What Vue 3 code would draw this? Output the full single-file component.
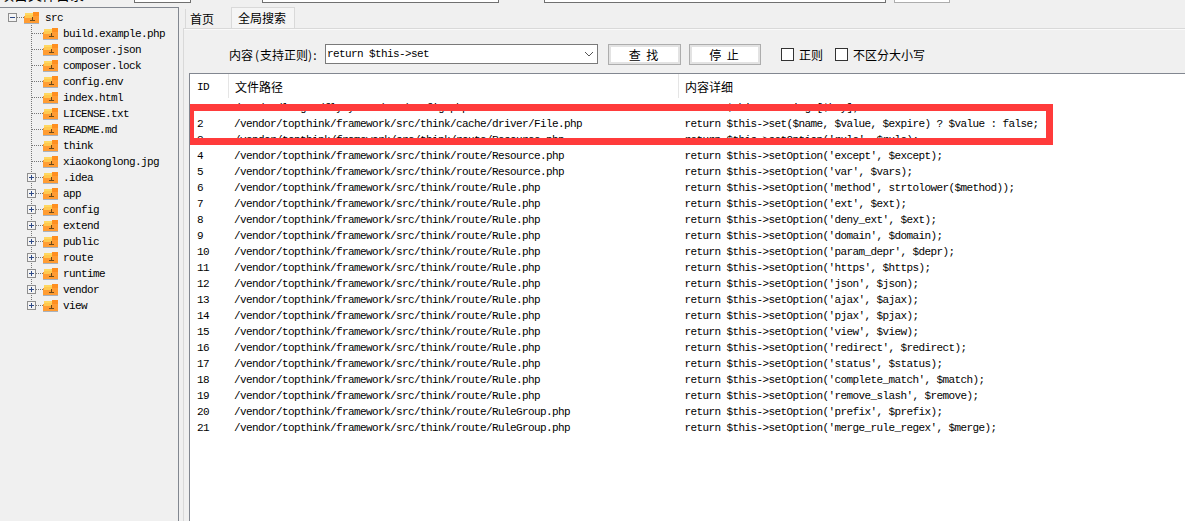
<script setup>
const files = ['build.example.php','composer.json','composer.lock','config.env','index.html','LICENSE.txt','README.md','think','xiaokonglong.jpg']
const dirs = ['.idea','app','config','extend','public','route','runtime','vendor','view']
const R = '/vendor/topthink/framework/src/think/route/'
const rows = [
  ['/vendor/league/flysystem/src/Config.php', "return $this->settings[$key];"],
  ['/vendor/topthink/framework/src/think/cache/driver/File.php', "return $this->set($name, $value, $expire) ? $value : false;"],
  [R+'Resource.php', "return $this->setOption('rule', $rule);"],
  [R+'Resource.php', "return $this->setOption('except', $except);"],
  [R+'Resource.php', "return $this->setOption('var', $vars);"],
  [R+'Rule.php', "return $this->setOption('method', strtolower($method));"],
  [R+'Rule.php', "return $this->setOption('ext', $ext);"],
  [R+'Rule.php', "return $this->setOption('deny_ext', $ext);"],
  [R+'Rule.php', "return $this->setOption('domain', $domain);"],
  [R+'Rule.php', "return $this->setOption('param_depr', $depr);"],
  [R+'Rule.php', "return $this->setOption('https', $https);"],
  [R+'Rule.php', "return $this->setOption('json', $json);"],
  [R+'Rule.php', "return $this->setOption('ajax', $ajax);"],
  [R+'Rule.php', "return $this->setOption('pjax', $pjax);"],
  [R+'Rule.php', "return $this->setOption('view', $view);"],
  [R+'Rule.php', "return $this->setOption('redirect', $redirect);"],
  [R+'Rule.php', "return $this->setOption('status', $status);"],
  [R+'Rule.php', "return $this->setOption('complete_match', $match);"],
  [R+'Rule.php', "return $this->setOption('remove_slash', $remove);"],
  [R+'RuleGroup.php', "return $this->setOption('prefix', $prefix);"],
  [R+'RuleGroup.php', "return $this->setOption('merge_rule_regex', $merge);"],
]
</script>

<template>
  <div class="app">
    <div class="top">
      <div class="top-row">
        <span class="top-title">项目文件目录</span>
        <span class="top-box b1"></span>
        <span class="top-box b2"></span>
        <span class="top-box b3"></span>
        <span class="top-btn"></span>
      </div>
    </div>
    <div class="main">
      <aside class="side">
        <div class="tree-row root">
          <svg class="root-gutter" width="16" height="16" shape-rendering="crispEdges">
            <line x1="9" y1="8.5" x2="16" y2="8.5" stroke="#777" stroke-dasharray="1 1" />
            <rect x="0.5" y="4.5" width="8" height="8" fill="#f4f4f4" stroke="#8e8e8e" />
            <line x1="2" y1="8.5" x2="7" y2="8.5" stroke="#2f4a86" />
          </svg>
          <svg class="folder" width="16" height="13" viewBox="0 0 16 13" shape-rendering="crispEdges">
            <rect x="1" y="1" width="9" height="4" fill="#ffd760" />
            <rect x="9" y="0" width="6" height="4" fill="#ff8f1f" />
            <rect x="0" y="4" width="15" height="7" fill="#ff9c33" />
            <rect x="1" y="3" width="8" height="3" fill="#ffc94f" />
            <rect x="8" y="5" width="1" height="3" fill="#6b4a1a" />
            <rect x="6" y="8" width="5" height="1" fill="#6b4a1a" />
            <rect x="0" y="11" width="15" height="1" fill="#a9b2bd" />
          </svg>
          <span class="mono name">src</span>
        </div>
        <div v-for="f in files" :key="f" class="tree-row child">
          <svg class="gutter" width="16" height="16" shape-rendering="crispEdges">
            <line x1="4.5" y1="0" x2="4.5" y2="16" stroke="#777" stroke-dasharray="1 1" />
            <line x1="5" y1="8.5" x2="16" y2="8.5" stroke="#777" stroke-dasharray="1 1" />
          </svg>
          <svg class="folder" width="16" height="13" viewBox="0 0 16 13" shape-rendering="crispEdges">
            <rect x="1" y="1" width="9" height="4" fill="#ffd760" />
            <rect x="9" y="0" width="6" height="4" fill="#ff8f1f" />
            <rect x="0" y="4" width="15" height="7" fill="#ff9c33" />
            <rect x="1" y="3" width="8" height="3" fill="#ffc94f" />
            <rect x="8" y="5" width="1" height="3" fill="#6b4a1a" />
            <rect x="6" y="8" width="5" height="1" fill="#6b4a1a" />
            <rect x="0" y="11" width="15" height="1" fill="#a9b2bd" />
          </svg>
          <span class="mono name">{{ f }}</span>
        </div>
        <div v-for="(d, i) in dirs" :key="d" class="tree-row child">
          <svg class="gutter" width="16" height="16" shape-rendering="crispEdges">
            <line x1="4.5" y1="0" x2="4.5" :y2="i === dirs.length - 1 ? 4 : 16" stroke="#777" stroke-dasharray="1 1" />
            <line x1="9" y1="8.5" x2="16" y2="8.5" stroke="#777" stroke-dasharray="1 1" />
            <rect x="0.5" y="4.5" width="8" height="8" fill="#f4f4f4" stroke="#8e8e8e" />
            <line x1="2" y1="8.5" x2="7" y2="8.5" stroke="#2f4a86" />
            <line x1="4.5" y1="6" x2="4.5" y2="11" stroke="#2f4a86" />
          </svg>
          <svg class="folder" width="16" height="13" viewBox="0 0 16 13" shape-rendering="crispEdges">
            <rect x="1" y="1" width="9" height="4" fill="#ffd760" />
            <rect x="9" y="0" width="6" height="4" fill="#ff8f1f" />
            <rect x="0" y="4" width="15" height="7" fill="#ff9c33" />
            <rect x="1" y="3" width="8" height="3" fill="#ffc94f" />
            <rect x="8" y="5" width="1" height="3" fill="#6b4a1a" />
            <rect x="6" y="8" width="5" height="1" fill="#6b4a1a" />
            <rect x="0" y="11" width="15" height="1" fill="#a9b2bd" />
          </svg>
          <span class="mono name">{{ d }}</span>
        </div>
      </aside>
      <section class="pane">
        <div class="tabs">
          <div class="tab">首页</div>
          <div class="tab active">全局搜索</div>
        </div>
        <div class="panel">
          <div class="form">
            <label class="label">内容<span class="po">(</span>支持正则<span>)</span><span class="colon">:</span></label>
            <div class="select">
              <span class="mono">return $this-&gt;set</span>
              <svg width="10" height="6" viewBox="0 0 10 6"><path d="M1 1l4 4 4-4" fill="none" stroke="#555" /></svg>
            </div>
            <button class="btn first">查 找</button>
            <button class="btn second">停 止</button>
            <span class="check c1"></span><span class="check-label">正则</span>
            <span class="check c2"></span><span class="check-label">不区分大小写</span>
          </div>
          <div class="list">
            <div class="head">
              <div class="hcell id mono">ID</div>
              <div class="hcell path">文件路径</div>
              <div class="hcell detail">内容详细</div>
            </div>
            <div class="body">
              <div v-for="(r, i) in rows" :key="i" class="row mono">
                <span class="id">{{ i + 1 }}</span>
                <span class="path">{{ r[0] }}</span>
                <span class="detail">{{ r[1] }}</span>
              </div>
              <div class="mark"></div>
            </div>
          </div>
        </div>
      </section>
    </div>
  </div>
</template>

<style scoped>
.app {
  width: 1185px;
  height: 521px;
  overflow: hidden;
  display: flex;
  flex-direction: column;
  background: #f0f0f0;
  color: #000;
  font-family: "Noto Sans CJK SC", sans-serif;
  font-size: 12px;
}
.mono {
  font-family: "Liberation Mono", monospace;
  font-size: 11px;
  letter-spacing: -0.6px;
  white-space: pre;
}
.top { height: 7px; flex: none; }
.top-row {
  height: 3px;
  display: flex;
  align-items: flex-end;
  overflow: hidden;
}
.top-title { width: 134px; flex: none; font-size: 14px; line-height: 18px; white-space: nowrap; }
.top-box { height: 12px; flex: none; border: 1px solid #707070; background: #fff; box-sizing: border-box; }
.b1 { width: 57px; }
.b2 { width: 237px; margin-left: 71px; }
.b3 { width: 342px; margin-left: 45px; }
.top-btn { width: 56px; height: 12px; margin-left: 8px; flex: none; box-sizing: border-box; border: 1px solid #adadad; background: #fff; }
.main { flex: 1; display: flex; min-height: 0; }
.side {
  width: 179px;
  flex: none;
  box-sizing: border-box;
  border-top: 1px solid #828790;
  border-right: 1px solid #828790;
  padding-top: 1px;
}
.tree-row { height: 16px; display: flex; align-items: center; }
.root { padding-left: 8px; }
.child { padding-left: 27px; }
.root-gutter, .gutter { flex: none; }
.folder { flex: none; margin-top: 3px; }
.name { margin-left: 4px; line-height: 16px; margin-top: 2px; }
.root .name { margin-left: 5px; }
.pane { flex: 1; min-width: 0; padding-left: 4px; display: flex; flex-direction: column; }
.tabs { height: 21px; flex: none; display: flex; align-items: flex-end; padding-left: 2px; }
.tab {
  height: 19px;
  width: 46px;
  box-sizing: border-box;
  border-left: 1px solid #d9d9d9;
  padding-left: 4px;
  line-height: 20px;
  white-space: nowrap;
}
.tab.active {
  height: 21px;
  width: 64px;
  border: 1px solid #d9d9d9;
  border-bottom: 0;
  background: #f5f5f5;
  padding-left: 6px;
  line-height: 19px;
}
.panel {
  flex: 1;
  min-height: 0;
  border-top: 1px solid #d9d9d9;
  border-left: 1px solid #d9d9d9;
  box-shadow: inset 0 1px 0 #fafafa;
  padding: 15px 0 0 5px;
  display: flex;
  flex-direction: column;
}
.form { height: 21px; flex: none; display: flex; align-items: flex-start; padding-left: 40px; }
.label { width: 96px; flex: none; line-height: 22px; white-space: nowrap; }
.po { margin: 0 1px 0 2px; }
.colon { margin-left: 1px; }
.select {
  width: 273px;
  height: 20px;
  flex: none;
  box-sizing: border-box;
  border: 1px solid #7a7a7a;
  background: #fff;
  display: flex;
  align-items: center;
  justify-content: space-between;
  padding: 0 3px 0 1px;
}
.btn {
  width: 73px;
  height: 21px;
  flex: none;
  margin-left: 8px;
  padding: 0 2px 0 0;
  box-sizing: border-box;
  border: 1px solid #adadad;
  box-shadow: inset 0 0 0 2px #e3e3e3;
  background: #fff;
  font: inherit;
  color: #000;
  word-spacing: 3px;
  line-height: 17px;
}
.btn.first { margin-left: 10px; }
.btn.second { width: 72px; }
.check {
  width: 13px;
  height: 13px;
  flex: none;
  margin-top: 4px;
  border: 1px solid #333;
  box-sizing: border-box;
  background: #fff;
}
.c1 { margin-left: 20px; }
.c2 { margin-left: 12px; }
.check-label { margin-left: 5px; line-height: 22px; white-space: nowrap; }
.list {
  flex: 1;
  min-height: 0;
  margin-top: 8px;
  border-top: 1px solid #828790;
  border-left: 1px solid #828790;
  background: #fff;
  overflow: hidden;
}
.head { height: 25px; display: flex; }
.hcell { height: 24px; line-height: 26px; box-sizing: border-box; padding-left: 6px; border-right: 1px solid #e5e5e5; flex: none; }
.head .id { width: 39px; padding-left: 7px; font-size: 11px; }
.head .path { width: 450px; }
.head .detail { border-right: 0; }
.body { position: relative; }
.row { height: 16px; line-height: 18px; display: flex; }
.row .id { width: 38px; padding-left: 7px; box-sizing: border-box; flex: none; }
.row .path { width: 450px; padding-left: 6px; box-sizing: border-box; flex: none; }
.row .detail { padding-left: 6.5px; }
.mark {
  position: absolute;
  left: -3px;
  top: 5px;
  width: 866px;
  height: 41px;
  box-sizing: border-box;
  border: 7px solid #ff3b3b;
}
</style>

<style>
html, body { overflow: hidden; background: #f0f0f0; }
</style>
